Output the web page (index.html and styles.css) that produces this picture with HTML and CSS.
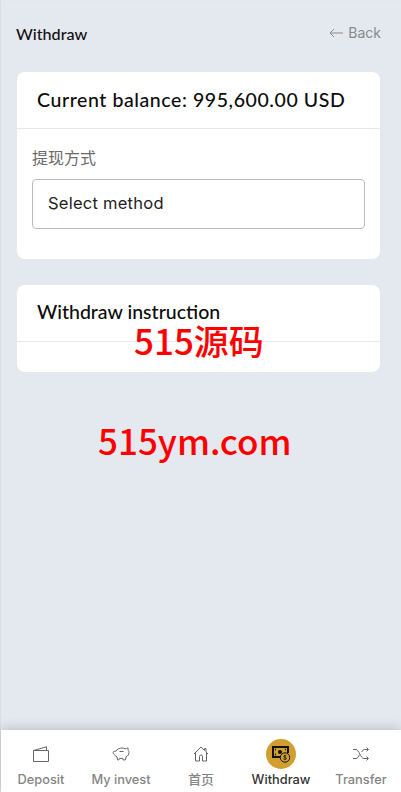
FILE: index.html
```html
<!DOCTYPE html>
<html lang="zh">
<head>
<meta charset="utf-8">
<title>Withdraw</title>
<link rel="stylesheet" href="styles.css">
</head>
<body>
<div class="app">
  <main class="content">
    <header class="topbar">
      <h1 class="page-title">Withdraw</h1>
      <a class="back" href="#">
        <svg class="back-icon" viewBox="0 0 14 10" width="14" height="10" fill="none" stroke="currentColor" stroke-width="1"><path d="M14 5H1M5 1 1 5l4 4"/></svg>
        <span>Back</span>
      </a>
    </header>
    <section class="card card-balance">
      <div class="card-head"><h2 class="card-title">Current balance: 995,600.00 USD</h2></div>
      <div class="card-body">
        <label class="field-label">提现方式</label>
        <div class="select">Select method</div>
      </div>
    </section>
    <section class="card card-instruction">
      <div class="card-head short"><h2 class="card-title small">Withdraw instruction</h2></div>
      <div class="card-empty"></div>
    </section>
  </main>
  <nav class="tabbar">
    <a class="tab" href="#">
      <span class="tab-icon"><svg viewBox="0 0 18 16" width="18" height="16" fill="none" stroke="#666" stroke-width="1"><path d="M1.500 4.500h15v11h-15zM1.500 4.500 14.500.8v3.700"/></svg></span>
      <span class="tab-label">Deposit</span>
    </a>
    <a class="tab" href="#">
      <span class="tab-icon"><svg viewBox="0 0 18 16" width="18" height="16" fill="none" stroke="#666" stroke-width="1"><path d="M1 6.500c0-1.500 2.200-1.300 3-1.300C5 3.200 7.500 2 10 2c1.300 0 2.400.3 3.300.9.700-.7 1.800-1 2.900-.8-.3.900-.3 1.700.1 2.400.5.500.7 1.200.7 2.100 0 2-1.400 3.500-3 4.300l-.6 3H11l-.3-1.500H7.300L7 13.900H5.500L5 10.900C3.200 10 2.300 8.900 2 7.800 1.400 7.700 1 7.200 1 6.500zM11.500 5.500h-4"/></svg></span>
      <span class="tab-label">My invest</span>
    </a>
    <a class="tab" href="#">
      <span class="tab-icon"><svg viewBox="0 0 16 16" width="16" height="16" fill="none" stroke="#666" stroke-width="1"><path d="M1 8 8 1l3.500 3.500V2.500h1.500v3.500L15 8M2.500 7v8h4v-4.500a1.500 1.500 0 0 1 3 0V15h4V7"/></svg></span>
      <span class="tab-label">首页</span>
    </a>
    <a class="tab active" href="#">
      <span class="tab-icon"><span class="active-disc"><svg viewBox="0 0 20 18" width="20" height="18" fill="none" stroke="#111"><path stroke-width="2" d="M10 12H2V2h15v6"/><circle cx="9" cy="7" r="2" fill="#111" stroke="none"/><path stroke-width="1.500" d="M4 4.500h1M14 4.500h1M4 9.500h1"/><circle cx="14" cy="12.500" r="4.700" fill="#d09f30" stroke-width="1"/><path stroke-width=".8" d="M15.300 11c-.6-.7-2.600-.7-2.600.5s2.700.7 2.700 2c0 1.200-2.200 1.200-2.900.4M14 9.800v5.400"/></svg></span></span>
      <span class="tab-label">Withdraw</span>
    </a>
    <a class="tab" href="#">
      <span class="tab-icon"><svg viewBox="0 0 18 16" width="18" height="16" fill="none" stroke="#666" stroke-width="1"><path d="M1 3.500h3c3 0 4.500 9 8 9h4M1 12.500h3c1.500 0 2.600-2 3.400-3.700M9.700 6c.8-1.400 1.500-2.500 2.800-2.500H16M14.500 1.500l2 2-2 2M14.500 10.500l2 2-2 2"/></svg></span>
      <span class="tab-label">Transfer</span>
    </a>
  </nav>
  <div class="watermark wm-one">515源码</div>
  <div class="watermark wm-two">515ym.com</div>
</div>
</body>
</html>
```
FILE: styles.css
```css
* { box-sizing: border-box; }
html, body { margin: 0; height: 100%; }
body {
  font-family: "Inter", "Noto Sans CJK SC", sans-serif;
  color: #111;
  background: #e4e8ef;
  overflow: hidden;
}
.app {
  position: relative;
  height: 792px;
  display: flex;
  flex-direction: column;
  border-top: 1px solid #e6e6e6;
  border-left: 1px solid #dcdde0;
}
.content {
  flex: 1;
  min-height: 0;
  padding: 0 20px 0 16px;
  display: flex;
  flex-direction: column;
}
.topbar {
  height: 71px;
  display: flex;
  align-items: center;
  justify-content: space-between;
  padding: 0 0 6px;
}
.page-title {
  margin: 0 0 0 -1px;
  font: 500 16.200px/24px "Lato", sans-serif;
  color: #111;
}
.back {
  display: flex;
  align-items: center;
  gap: 5px;
  color: #8a8a8a;
  text-decoration: none;
  font: 400 14px/20px "Inter", sans-serif;
  margin-top: -2px;
}
.card {
  background: #fff;
  border-radius: 8px;
  overflow: hidden;
  flex: none;
}
.card-balance { height: 187px; width: 363px; }
.card-instruction { margin-top: 26px; height: 87px; width: 363px; }
.card-head {
  height: 57px;
  padding: 0 20px;
  display: flex;
  align-items: center;
  border-bottom: 1px solid #e7e8ea;
}
.card-head.short { align-items: flex-start; padding-top: 15px; }
.card-title {
  margin: 0;
  font: 500 19.500px/26px "Lato", sans-serif;
  letter-spacing: .58px;
  color: #0c0c0c;
  white-space: nowrap;
}
.card-title.small { letter-spacing: 0; line-height: 24px; }
.card-body { padding: 17px 15px 0; }
.field-label {
  display: block;
  font: 400 16px/22px "Noto Sans CJK SC", sans-serif;
  color: #6b6b6b;
  margin-bottom: 11px;
}
.select {
  height: 50px;
  border: 1px solid #bcbcbf;
  border-radius: 4px;
  padding: 0 15px 2px;
  display: flex;
  align-items: center;
  font: 400 16.500px/22px "Inter", sans-serif;
  letter-spacing: .25px;
  color: #222;
}
.tabbar {
  flex: none;
  height: 62px;
  background: #fff;
  display: grid;
  grid-template-columns: repeat(5, 1fr);
  box-shadow: 0 -1px 12px rgba(0, 0, 0, .2);
  position: relative;
}
.tab {
  display: flex;
  flex-direction: column;
  align-items: center;
  text-decoration: none;
  color: #858585;
  padding-top: 9px;
}
.tab-icon {
  height: 30px;
  display: flex;
  align-items: center;
  justify-content: center;
}
.tab-label {
  font: 500 12.800px/18px "Inter", "Noto Sans CJK SC", sans-serif;
  margin-top: 2px;
  white-space: nowrap;
}
.tab.active { color: #333; }
.active-disc {
  width: 30px;
  height: 30px;
  border-radius: 50%;
  background: #d09f30;
  display: flex;
  align-items: center;
  justify-content: center;
}
.watermark {
  position: absolute;
  color: #fe0000;
  font-family: "Noto Sans CJK SC", sans-serif;
  font-weight: 500;
  font-size: 35px;
  line-height: 44px;
  white-space: nowrap;
}
.wm-one { left: 133px; top: 317px; }
.wm-two { left: 97px; top: 417px; }
```
